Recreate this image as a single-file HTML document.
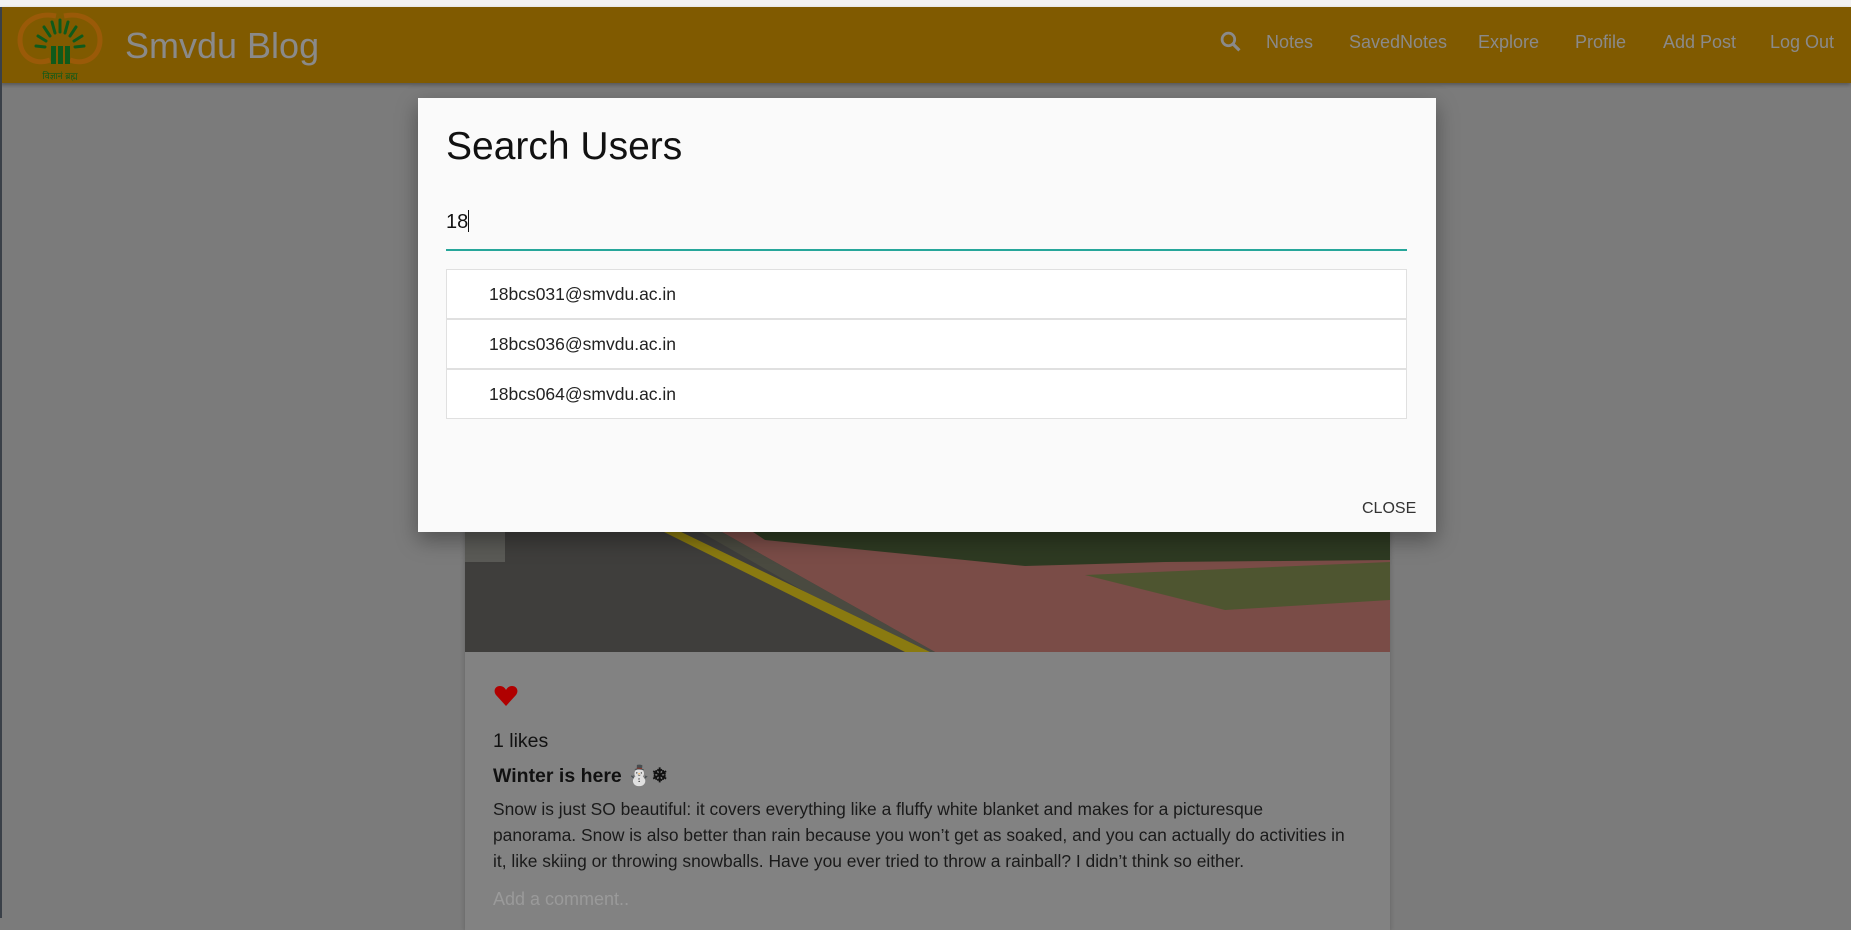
<!DOCTYPE html>
<html><head><meta charset="utf-8"><style>
*{margin:0;padding:0;box-sizing:border-box}
body{width:1851px;height:918px;overflow:hidden;background:#7b7b7b;font-family:"Liberation Sans",sans-serif;position:relative}
.top{position:absolute;left:0;top:0;width:1851px;height:7px;background:#f2f2f2}
.hdr{position:absolute;left:0;top:7px;width:1851px;height:76px;background:#805a00;box-shadow:0 2px 4px rgba(0,0,0,.3)}
.lb{position:absolute;left:0;top:7px;width:2px;height:911px;background:#3a4048}
.title{position:absolute;left:125px;top:18px;font-size:36px;color:#8a8a8a}
.nav{position:absolute;top:31px;font-size:18px;color:#8a8a8a}
.card{position:absolute;left:465px;top:500px;width:925px;height:430px;background:#828282;box-shadow:0 2px 5px rgba(0,0,0,.2)}
.ct{position:absolute;left:493px;color:#111}
.modal{position:absolute;left:418px;top:98px;width:1018px;height:434px;background:#fafafa;box-shadow:0 8px 20px rgba(0,0,0,.35)}
.row{position:absolute;left:28px;width:961px;height:50px;border:1px solid #e0e0e0;background:#fff;font-size:17.5px;color:#222;padding-left:42px;line-height:48px}
</style></head><body>
<div class="top"></div>
<div class="hdr">
<svg style="position:absolute;left:12px;top:3px" width="96" height="72" viewBox="0 0 96 72">
<path d="M44 6 C26 2 8 12 8 30 C8 46 22 56 38 50" fill="none" stroke="#9a5a08" stroke-width="5"/>
<path d="M52 6 C70 2 88 12 88 30 C88 46 74 56 58 50" fill="none" stroke="#9a5a08" stroke-width="5"/>
<g stroke="#0f5a1a" stroke-width="3" stroke-linecap="round">
<line x1="48" y1="10" x2="48" y2="22"/><line x1="40" y1="12" x2="43" y2="23"/><line x1="56" y1="12" x2="53" y2="23"/>
<line x1="32" y1="17" x2="38" y2="26"/><line x1="64" y1="17" x2="58" y2="26"/>
<line x1="26" y1="26" x2="34" y2="31"/><line x1="70" y1="26" x2="62" y2="31"/>
<line x1="24" y1="36" x2="33" y2="37"/><line x1="72" y1="36" x2="63" y2="37"/></g>
<rect x="39" y="36" width="5" height="18" fill="#0f5a1a"/><rect x="46" y="36" width="5" height="18" fill="#0f5a1a"/><rect x="53" y="36" width="5" height="18" fill="#0f5a1a"/>
<text x="48" y="69" font-size="9" fill="#0f5a1a" text-anchor="middle" font-family="Liberation Sans,sans-serif">विज्ञानं ब्रह्म</text>
</svg>
<div class="title">Smvdu Blog</div>
<svg style="position:absolute;left:1220px;top:24px" width="21" height="21" viewBox="0 0 20 20"><circle cx="8" cy="8" r="6" fill="none" stroke="#8a8a8a" stroke-width="2.6"/><line x1="12.5" y1="12.5" x2="18.5" y2="18.5" stroke="#8a8a8a" stroke-width="3"/></svg>
<div class="nav" style="left:1266px;top:25px">Notes</div>
<div class="nav" style="left:1349px;top:25px">SavedNotes</div>
<div class="nav" style="left:1478px;top:25px">Explore</div>
<div class="nav" style="left:1575px;top:25px">Profile</div>
<div class="nav" style="left:1663px;top:25px">Add Post</div>
<div class="nav" style="left:1770px;top:25px">Log Out</div>
</div>
<div class="lb"></div>
<div class="card">
<svg style="position:absolute;left:0;top:0" width="925" height="152" viewBox="0 0 925 152">
<rect width="925" height="152" fill="#3f3e3c"/>
<polygon points="200,0 925,0 925,152 470,152" fill="#7a4c47"/>
<polygon points="180,0 200,0 470,152 445,152" fill="#4a4a40"/>
<polygon points="195,30 212,30 465,152 440,152" fill="#8a7a10"/>
<polygon points="240,0 925,0 925,60 700,62 560,66 300,40" fill="#2e3a22"/>
<polygon points="620,75 925,62 925,100 760,110" fill="#4e5530"/>
<rect x="0" y="0" width="40" height="62" fill="#5a5a56"/>
</svg>
<svg style="position:absolute;left:29px;top:185px" width="24" height="22" viewBox="0 0 24 22"><path d="M12 21 L2 10 C-1 6 1 1 6 1 C9 1 11 3 12 5 C13 3 15 1 18 1 C23 1 25 6 22 10 Z" fill="#b00000"/></svg>
</div>
<div class="ct" style="top:730px;font-size:19.5px">1 likes</div>
<div class="ct" style="top:764px;font-size:19.5px;font-weight:bold">Winter is here ⛄❄</div>
<div class="ct" style="top:796px;font-size:17.4px;line-height:26px;white-space:nowrap;color:#1a1a1a">Snow is just SO beautiful: it covers everything like a fluffy white blanket and makes for a picturesque<br>panorama. Snow is also better than rain because you won’t get as soaked, and you can actually do activities in<br>it, like skiing or throwing snowballs. Have you ever tried to throw a rainball? I didn’t think so either.</div>
<div class="ct" style="top:889px;font-size:18px;color:#9a9a9a">Add a comment..</div>
<div class="modal">
<div style="position:absolute;left:28px;top:27px;font-size:39px;color:#111">Search Users</div>
<div style="position:absolute;left:28px;top:112px;font-size:20px;color:#111">18<span style="display:inline-block;width:1px;height:22px;background:#111;vertical-align:-4px"></span></div>
<div style="position:absolute;left:28px;top:151px;width:961px;height:2px;background:#26a69a"></div>
<div class="row" style="top:171px">18bcs031@smvdu.ac.in</div>
<div class="row" style="top:221px">18bcs036@smvdu.ac.in</div>
<div class="row" style="top:271px">18bcs064@smvdu.ac.in</div>
<div style="position:absolute;left:944px;top:402px;font-size:16px;color:#333">CLOSE</div>
</div>
</body></html>
